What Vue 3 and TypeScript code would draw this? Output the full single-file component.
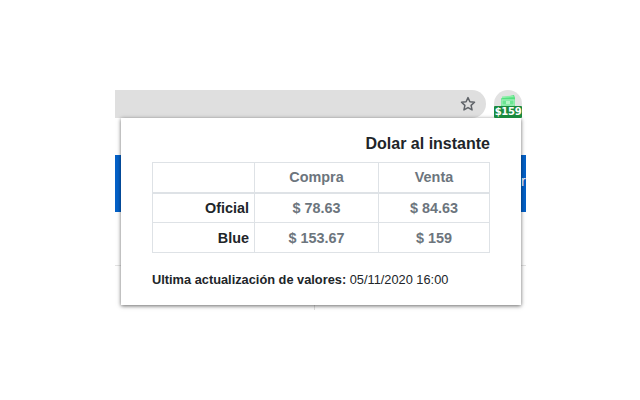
<script setup lang="ts">
interface Row { name: string; compra: string; venta: string }
const rows: Row[] = [
  { name: 'Oficial', compra: '$ 78.63', venta: '$ 84.63' },
  { name: 'Blue', compra: '$ 153.67', venta: '$ 159' },
]
</script>

<template>
  <div class="stage">
    <div class="browser">
      <div class="toolbar">
        <div class="omnibox">
          <svg class="star" width="16" height="16" viewBox="0 0 16 16">
            <path d="M8 1.6l1.9 4.2 4.6.5-3.4 3.1.95 4.5L8 11.6l-4.05 2.3.95-4.5L1.5 6.3l4.6-.5z" fill="none" stroke="#5f6368" stroke-width="1.5" stroke-linejoin="round" />
          </svg>
        </div>
        <div class="ext">
          <svg class="bill" width="16" height="11" viewBox="0 0 16 11">
            <path d="M1 3.5L14 0l1 3v8H1z" fill="#52e07e" />
            <path d="M2 1.6L13 .6l1 1.6L2 3z" fill="#8cf0a8" />
            <rect x="1" y="4" width="14" height="7" fill="#6ae592" />
            <rect x="2" y="5" width="12" height="5" fill="none" stroke="#a6f0bc" stroke-width="1" />
            <rect x="6" y="6" width="4" height="3" fill="#b4f4c6" />
          </svg>
          <span class="badge">$159</span>
        </div>
      </div>
      <div class="page">
        <div class="band"></div>
        <div class="rule"></div>
        <div class="divider"></div>
        <span class="peek">r</span>
      </div>
      <section class="popup">
        <h1 class="title">Dolar al instante</h1>
        <table class="rates">
          <thead>
            <tr>
              <th class="blank"></th>
              <th>Compra</th>
              <th>Venta</th>
            </tr>
          </thead>
          <tbody>
            <tr v-for="row in rows" :key="row.name">
              <th class="name">{{ row.name }}</th>
              <td>{{ row.compra }}</td>
              <td>{{ row.venta }}</td>
            </tr>
          </tbody>
        </table>
        <p class="updated"><strong>Ultima actualización de valores:</strong> 05/11/2020 16:00</p>
      </section>
    </div>
  </div>
</template>

<style>
html, body { margin: 0; background: #fff; }
</style>

<style scoped>
.stage {
  width: 640px;
  height: 400px;
  padding: 90px 0 0 115px;
  box-sizing: border-box;
  font-family: "Liberation Sans", Arial, sans-serif;
  overflow: hidden;
}
.browser { position: relative; width: 411px; height: 220px; }
.toolbar { display: flex; height: 28px; }
.omnibox {
  width: 371px;
  background: #dfdfdf;
  border-radius: 0 14px 14px 0;
  display: flex;
  align-items: center;
  justify-content: flex-end;
  padding-right: 10px;
  box-sizing: border-box;
}
.star { display: block; }
.ext {
  position: relative;
  width: 28px;
  height: 28px;
  margin-left: 8px;
  background: #e2e2e2;
  border-radius: 14px;
}
.bill { position: absolute; left: 6px; top: 5px; }
.badge {
  position: absolute;
  left: 0;
  top: 16px;
  width: 28px;
  height: 12px;
  background: #1a8a3e;
  color: #fff;
  font-family: "DejaVu Sans", sans-serif;
  font-size: 10px;
  font-weight: 700;
  line-height: 12px;
  text-align: center;
  letter-spacing: -0.3px;
  border-radius: 1px;
  z-index: 1;
}
.page { position: relative; height: 192px; }
.band { position: absolute; left: 0; right: 0; top: 37px; height: 57px; background: #0461c8; }
.rule { position: absolute; left: 0; right: 0; top: 147px; height: 1px; background: #e3e3e3; }
.divider { position: absolute; left: 199px; top: 147px; width: 1px; height: 45px; background: #dedede; }
.peek { position: absolute; left: 406px; top: 55px; color: #fff; font-size: 14px; line-height: 16px; }
.popup {
  position: absolute;
  left: 6px;
  top: 28px;
  width: 400px;
  height: 187px;
  box-sizing: border-box;
  padding: 16px 31px 0;
  background: #fff;
  box-shadow: 0 1px 4px rgba(0, 0, 0, 0.6);
}
.title {
  margin: 0 0 8px;
  font-size: 16px;
  font-weight: 700;
  line-height: 20px;
  color: #212529;
  text-align: right;
}
.rates {
  width: 338px;
  table-layout: fixed;
  border-collapse: collapse;
  font-size: 14.4px;
  line-height: 16px;
}
.rates th, .rates td {
  height: 30px;
  padding: 0;
  box-sizing: border-box;
  border: 1px solid #dee2e6;
  text-align: center;
  font-weight: 700;
  color: #6c757d;
}
.rates thead th { border-bottom-width: 2px; }
.rates .blank { width: 102px; }
.rates thead th:nth-child(2) { width: 124px; }
.rates .name { color: #212529; text-align: right; padding-right: 5px; }
.updated {
  margin: 19px 0 0;
  font-size: 12.8px;
  line-height: 16px;
  color: #212529;
}
.updated strong { font-weight: 700; }
</style>
